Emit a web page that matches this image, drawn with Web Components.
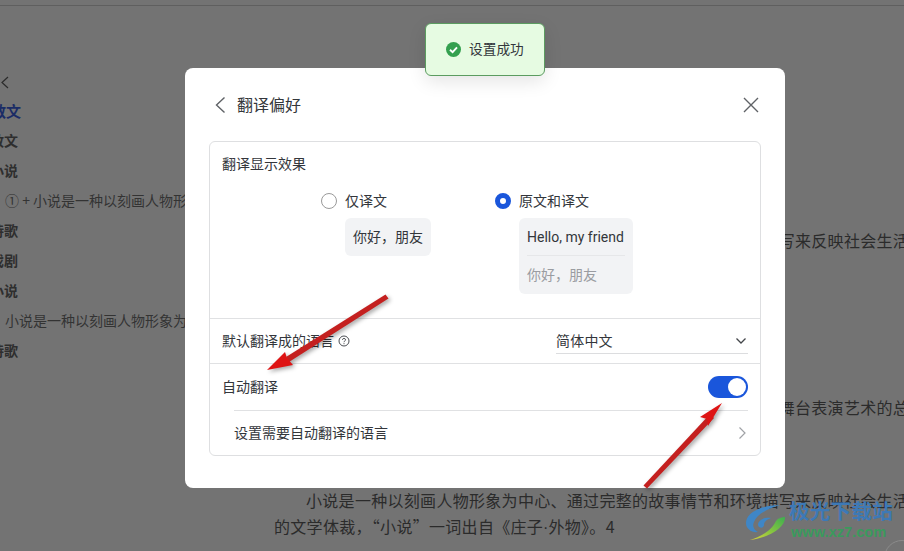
<!DOCTYPE html>
<html lang="zh">
<head>
<meta charset="utf-8">
<title>翻译偏好</title>
<style>
  html, body { margin: 0; height: 100%; overflow: hidden; background: #737373; }
  body { font-family: "Noto Sans CJK SC", "Noto Sans", sans-serif; }
</style>
</head>
<body>
<doc-backdrop>
  <nav-item slot="nav" kind="active">散文</nav-item>
  <nav-item slot="nav">散文</nav-item>
  <nav-item slot="nav">小说</nav-item>
  <nav-item slot="nav" kind="child">① + 小说是一种以刻画人物形象为中心</nav-item>
  <nav-item slot="nav">诗歌</nav-item>
  <nav-item slot="nav">戏剧</nav-item>
  <nav-item slot="nav">小说</nav-item>
  <nav-item slot="nav" kind="child">小说是一种以刻画人物形象为中心</nav-item>
  <nav-item slot="nav">诗歌</nav-item>
</doc-backdrop>
<pref-modal></pref-modal>
<toast-note>设置成功</toast-note>
<red-arrows></red-arrows>
<brand-mark></brand-mark>

<script>
class DocBackdrop extends HTMLElement {
  constructor() {
    super();
    this.attachShadow({mode: "open"});
    this.shadowRoot.innerHTML = `
<style>
  :host { display: block; position: relative; height: 551px; overflow: hidden; color: #2b2b2b; }
  .top { height: 5px; border-bottom: 1px solid #5f5f5f; }
  .cols { display: flex; }
  aside { width: 195px; flex: none; margin-left: -10px; padding-top: 61px; box-sizing: border-box; }
  .back { height: 30px; padding-left: 4px; margin-top: 0; margin-bottom: -9px; }
  .back svg { display: block; margin-top: 8px; }
  main { width: 640px; flex: none; margin-left: 89px; padding-top: 58px; font-size: 16px; letter-spacing: .3px; }
  h2 { margin: 0 0 139px; font-size: 18px; line-height: 24px; font-weight: 700; }
  p { margin: 0; line-height: 26px; text-indent: 2em; white-space: nowrap; }
  .a { margin-bottom: 141px; }
  .b { margin-bottom: 67px; }
  .plain { text-indent: 0; }
  .dot { font-family: "Liberation Sans", sans-serif; letter-spacing: 0; }
  /* round scroll-top button, mostly off the page */
  .corner { position: absolute; left: 884px; top: 540px; width: 36px; height: 36px; box-sizing: border-box; border: 1px solid #8b8b8b; border-radius: 50%; }
</style>
<div class="top"></div>
<div class="cols">
  <aside>
    <div class="back"><svg width="16" height="16" viewBox="0 0 16 16" fill="none" stroke="#2b2b2b" stroke-width="1.2"><path d="M14 2 L8 7.5 L14 13"/></svg></div>
    <slot name="nav"></slot>
  </aside>
  <main>
    <h2>小说概述</h2>
    <p class="a">小说是一种以刻画人物形象为中心、通过完整的故事情节和环境描写来反映社会生活</p>
    <p class="b">戏剧是一种以语言、动作、舞蹈、音乐、木偶等形式达到叙事目的舞台表演艺术的总</p>
    <p>小说是一种以刻画人物形象为中心、通过完整的故事情节和环境描写来反映社会生活</p>
    <p class="plain">的文学体裁，“小说”一词出自《庄子<span class="dot">·</span>外物》。4</p>
  </main>
</div>
<div class="corner"></div>`;
  }
}

class NavItem extends HTMLElement {
  constructor() {
    super();
    this.attachShadow({mode: "open"});
    this.shadowRoot.innerHTML = `
<style>
  :host { display: block; height: 30px; line-height: 30px; font-size: 14px; font-weight: 700; color: #2e2e2e; white-space: nowrap; overflow: hidden; }
  :host([kind="active"]) { height: 29px; font-size: 15px; color: #1b2c66; padding-left: 1px; }
  :host([kind="child"]) { font-weight: 400; padding-left: 15px; color: #333; }
</style>
<slot></slot>`;
  }
}

class PrefRadio extends HTMLElement {
  constructor() {
    super();
    this.attachShadow({mode: "open"});
    this.shadowRoot.innerHTML = `
<style>
  :host { display: grid; grid-template-columns: 16px auto; column-gap: 8px; row-gap: 7px; align-items: center; font-size: 14px; color: #33363b; }
  .dot { width: 16px; height: 16px; box-sizing: border-box; border: 1px solid #9a9a9a; border-radius: 50%; background: #fff; }
  :host([checked]) .dot { border: 5px solid #1a56db; }
  .label { line-height: 18px; padding-bottom: 2px; }
  .bubble { grid-column: 2; background: #f2f3f5; border-radius: 6px; padding: 0 8px; }
</style>
<span class="dot"></span>
<span class="label"></span>
<div class="bubble"><slot></slot></div>`;
  }
  connectedCallback() {
    this.shadowRoot.querySelector(".label").textContent = this.getAttribute("label");
  }
}

class PrefModal extends HTMLElement {
  constructor() {
    super();
    this.attachShadow({mode: "open"});
    this.shadowRoot.innerHTML = `
<style>
  :host { display: block; position: absolute; left: 185px; top: 68px; width: 600px; height: 420px; box-sizing: border-box; background: #fff; border-radius: 8px; padding: 0 24px; color: #33363b; font-size: 14px; }
  header { height: 73px; display: flex; align-items: center; font-size: 16px; }
  header .back { width: 24px; margin-left: 4px; flex: none; }
  header svg { display: block; }
  header .title { flex: 1; padding-bottom: 1px; }
  .box { border: 1px solid #dedfe1; border-radius: 6px; height: 315px; box-sizing: border-box; }
  .show { height: 177px; box-sizing: border-box; padding: 11px 12px 0; border-bottom: 1px solid #e0e1e3; }
  .show .cap { line-height: 20px; }
  .opts { display: flex; justify-content: center; gap: 64px; margin-top: 18px; padding-right: 16px; align-items: flex-start; }
  .single { height: 38px; line-height: 36px; white-space: nowrap; }
  .line { border-bottom: 1px solid #e6e7e9; width: 98px; height: 37px; line-height: 38px; white-space: nowrap; font-family: Roboto, sans-serif; font-size: 14px; }
  .line.sub { font-family: inherit; color: #9a9ca1; height: 38px; line-height: 36px; border: 0; }
  .row { display: flex; align-items: center; padding: 0 12px; height: 45px; border-bottom: 1px solid #e0e1e3; box-sizing: border-box; }
  .row .grow { flex: 1; display: flex; align-items: center; gap: 4px; padding-bottom: 2px; }
  .select { width: 192px; height: 26px; margin-top: 9px; align-self: flex-start; border-bottom: 1px solid #dcdddf; display: flex; align-items: center; justify-content: space-between; box-sizing: border-box; padding-right: 1px; }
  .select span { letter-spacing: .2px; padding-bottom: 1px; }
  .auto { height: 46px; padding: 0 12px; display: flex; align-items: center; justify-content: space-between; box-sizing: border-box; }
  .auto span:first-child, .more span { padding-bottom: 2px; }
  .switch { width: 40px; height: 22px; border-radius: 11px; background: #1a56db; position: relative; }
  .switch::after { content: ""; position: absolute; right: 2px; top: 2px; width: 18px; height: 18px; border-radius: 50%; background: #fff; }
  .more { margin-left: 24px; margin-right: 12px; border-top: 1px solid #e0e1e3; height: 45px; box-sizing: border-box; display: flex; align-items: center; justify-content: space-between; }
</style>
<header>
  <div class="back"><svg width="16" height="18" viewBox="0 0 16 18" fill="none" stroke="#5f6266" stroke-width="1.4"><path d="M11.5 1.5 L3.5 9 L11.5 16.5"/></svg></div>
  <div class="title">翻译偏好</div>
  <svg width="18" height="18" viewBox="0 0 18 18" fill="none" stroke="#5f6266" stroke-width="1.4" style="margin-right:1px"><path d="M2 2 L16 16 M16 2 L2 16"/></svg>
</header>
<div class="box">
  <div class="show">
    <div class="cap">翻译显示效果</div>
    <div class="opts">
      <pref-radio label="仅译文"><div class="single">你好，朋友</div></pref-radio>
      <pref-radio label="原文和译文" checked>
        <div class="line">Hello, my friend</div>
        <div class="line sub">你好，朋友</div>
      </pref-radio>
    </div>
  </div>
  <div class="row">
    <div class="grow">默认翻译成的语言
      <svg width="12" height="12" viewBox="0 0 12 12" fill="none" stroke="#4a4d52" stroke-width="1" style="margin-top:2px"><circle cx="6" cy="6" r="5"/><path d="M4.4 4.8 C4.4 3 7.6 3 7.6 4.8 C7.6 5.9 6 5.9 6 7.2"/><path d="M6 8.2 V9.2"/></svg>
    </div>
    <div class="select"><span>简体中文</span>
      <svg width="12" height="8" viewBox="0 0 12 8" fill="none" stroke="#43464a" stroke-width="1.3"><path d="M1.5 1.5 L6 6 L10.5 1.5"/></svg>
    </div>
  </div>
  <div class="auto"><span>自动翻译</span><span class="switch"></span></div>
  <div class="more"><span>设置需要自动翻译的语言</span>
    <svg width="10" height="14" viewBox="0 0 10 14" fill="none" stroke="#a0a2a6" stroke-width="1.2" style="margin-right:1px"><path d="M2.5 1.5 L8 7 L2.5 12.5"/></svg>
  </div>
</div>`;
  }
}

class ToastNote extends HTMLElement {
  constructor() {
    super();
    this.attachShadow({mode: "open"});
    this.shadowRoot.innerHTML = `
<style>
  :host { display: flex; position: absolute; left: 425px; top: 23px; width: 120px; height: 53px; box-sizing: border-box; align-items: center; gap: 8px; padding-left: 20px; background: #e6fbe2; border: 1px solid #5b9c60; border-radius: 6px; box-shadow: 0 6px 18px rgba(0,0,0,.1); color: #33363b; font-size: 13.7px; }
  svg { display: block; flex: none; }
  span { padding-bottom: 3px; }
</style>
<svg width="15" height="15" viewBox="0 0 15 15"><circle cx="7.5" cy="7.5" r="7.5" fill="#34a04f"/><path d="M4 7.8 L6.6 10.2 L11 5.4" fill="none" stroke="#fff" stroke-width="1.9"/></svg>
<span><slot></slot></span>`;
  }
}

class RedArrows extends HTMLElement {
  constructor() {
    super();
    this.attachShadow({mode: "open"});
    this.shadowRoot.innerHTML = `
<style>
  :host { display: block; position: absolute; left: 0; top: 0; width: 904px; height: 551px; pointer-events: none; }
  svg { display: block; filter: drop-shadow(2px 2px 2px rgba(0,0,0,.35)); }
</style>
<svg width="904" height="551" viewBox="0 0 904 551">
  <g fill="#c4201f">
    <path d="M385.5 294.5 L388.5 298.5 L289 362 L286 357 Z"/>
    <path d="M643.5 485.5 L647 488.5 L714 418 L710 414 Z"/>
  </g>
  <g fill="#de1414">
    <path d="M267 370 L285 352 L287 358 L293 365 Z"/>
    <path d="M722 403 L700 417 L707 419 L708 426 Z"/>
  </g>
</svg>`;
  }
}

class BrandMark extends HTMLElement {
  constructor() {
    super();
    this.attachShadow({mode: "open"});
    this.shadowRoot.innerHTML = `
<style>
  :host { display: flex; position: absolute; left: 745px; top: 497px; height: 46px; gap: 2px; align-items: flex-start; pointer-events: none; }
  svg { display: block; flex: none; }
  .text { display: flex; flex-direction: column; }
  .cn { font-size: 20.5px; font-weight: 700; color: #3d79b6; line-height: 27px; letter-spacing: .3px; white-space: nowrap; }
  .en { font-family: "Liberation Sans", sans-serif; font-size: 14.6px; font-weight: 700; color: #3a9a5c; line-height: 16px; white-space: nowrap; margin-left: 2px; }
</style>
<svg width="42" height="46" viewBox="0 0 42 46">
  <defs><linearGradient id="g" x1="1" y1="0" x2="0" y2="1"><stop offset="0" stop-color="#3cae50"/><stop offset=".55" stop-color="#8cc63f"/><stop offset="1" stop-color="#dcd23c"/></linearGradient></defs>
  <path d="M35 8 C18 8 1 15 1 26 C1 32 7 36 13 35 C9 33 7 29 9 25 C12 17 24 11 35 8 Z" fill="#3f86c6"/>
  <path d="M13 28 C13 23 19 20 26 21 C21 23 19 25 19 28 C19 31 14 32 13 28 Z" fill="#3f86c6"/>
  <path d="M40 20 C41 30 24 41 5 43 C17 39 27 33 31 24 C33 21 37 20 40 20 Z" fill="url(#g)"/>
</svg>
<div class="text">
  <span class="cn">极光下载站</span>
  <span class="en">www.xz7.com</span>
</div>`;
  }
}

customElements.define("doc-backdrop", DocBackdrop);
customElements.define("nav-item", NavItem);
customElements.define("pref-radio", PrefRadio);
customElements.define("pref-modal", PrefModal);
customElements.define("toast-note", ToastNote);
customElements.define("red-arrows", RedArrows);
customElements.define("brand-mark", BrandMark);
</script>
</body>
</html>
